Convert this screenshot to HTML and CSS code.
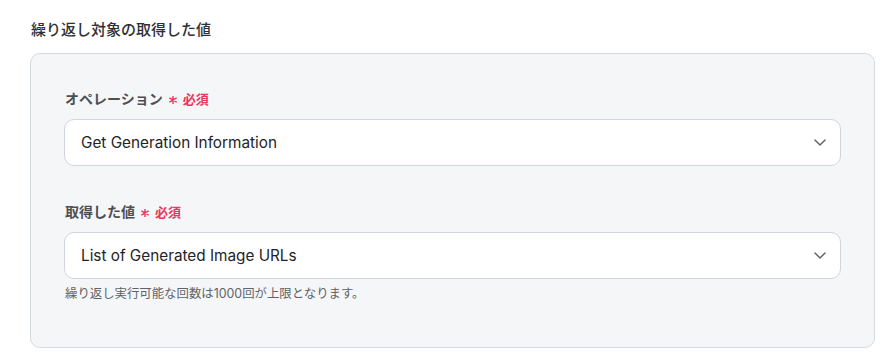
FILE: index.html
```html
<!DOCTYPE html>
<html lang="ja">
<head>
<meta charset="utf-8">
<link rel="stylesheet" href="styles.css">
</head>
<body>
<div class="page">
  <h2 class="title">繰り返し対象の取得した値</h2>
  <div class="panel">
    <div class="field">
      <div class="label">オペレーション<span class="req"><svg class="ast" width="8" height="8" viewBox="0 0 8 8"><path d="M4 0.3v7.4M0.8 2.15l6.4 3.7M0.8 5.85l6.4-3.7" stroke="#e8365d" stroke-width="1.4" stroke-linecap="round"/></svg>必須</span></div>
      <div class="select">
        <span class="value">Get Generation Information</span>
        <svg class="chev" width="12" height="7" viewBox="0 0 12 7"><path d="M1 1l5 5 5-5" fill="none" stroke="#666" stroke-width="1.5" stroke-linecap="round" stroke-linejoin="round"/></svg>
      </div>
    </div>
    <div class="field">
      <div class="label">取得した値<span class="req"><svg class="ast" width="8" height="8" viewBox="0 0 8 8"><path d="M4 0.3v7.4M0.8 2.15l6.4 3.7M0.8 5.85l6.4-3.7" stroke="#e8365d" stroke-width="1.4" stroke-linecap="round"/></svg>必須</span></div>
      <div class="select">
        <span class="value">List of Generated Image URLs</span>
        <svg class="chev" width="12" height="7" viewBox="0 0 12 7"><path d="M1 1l5 5 5-5" fill="none" stroke="#666" stroke-width="1.5" stroke-linecap="round" stroke-linejoin="round"/></svg>
      </div>
      <p class="help">繰り返し実行可能な回数は1000回が上限となります。</p>
    </div>
  </div>
</div>
</body>
</html>
```
FILE: styles.css
```css
* { box-sizing: border-box; }
html, body { margin: 0; padding: 0; background: #fff; }
body {
  font-family: Inter, "Noto Sans CJK JP", sans-serif;
  color: #333;
}
.page {
  padding: 20px 19px 0 30px;
}
.title {
  margin: 0 0 13px 1px;
  font-size: 15px;
  line-height: 20px;
  font-weight: 500;
  color: #2f3033;
}
.panel {
  width: 845px;
  height: 295px;
  background: #f5f6f8;
  border: 1px solid #d5d9e0;
  border-radius: 10px;
  padding: 35px 33px 0 33px;
  display: flex;
  flex-direction: column;
  gap: 36px;
}
.label {
  font-size: 14px;
  line-height: 20px;
  font-weight: 700;
  color: #4d4f55;
  margin: 0 0 10px 1px;
  display: flex;
  align-items: center;
}
.req {
  color: #e8365d;
  font-size: 13px;
  font-weight: 600;
  margin-left: 6px;
  display: flex;
  align-items: center;
}
.ast {
  display: block;
  margin: 2px 6px 0 0;
}
.select {
  height: 47px;
  background: #fff;
  border: 1px solid #d0d5dd;
  border-radius: 10px;
  display: flex;
  align-items: center;
  justify-content: space-between;
  padding: 0 14px 0 16px;
}
.value {
  font-size: 15.3px;
  color: #1f2328;
}
.chev { display: block; }
.help {
  margin: 6px 0 0 1px;
  font-size: 12.4px;
  line-height: 18px;
  color: #5f6368;
}
```
